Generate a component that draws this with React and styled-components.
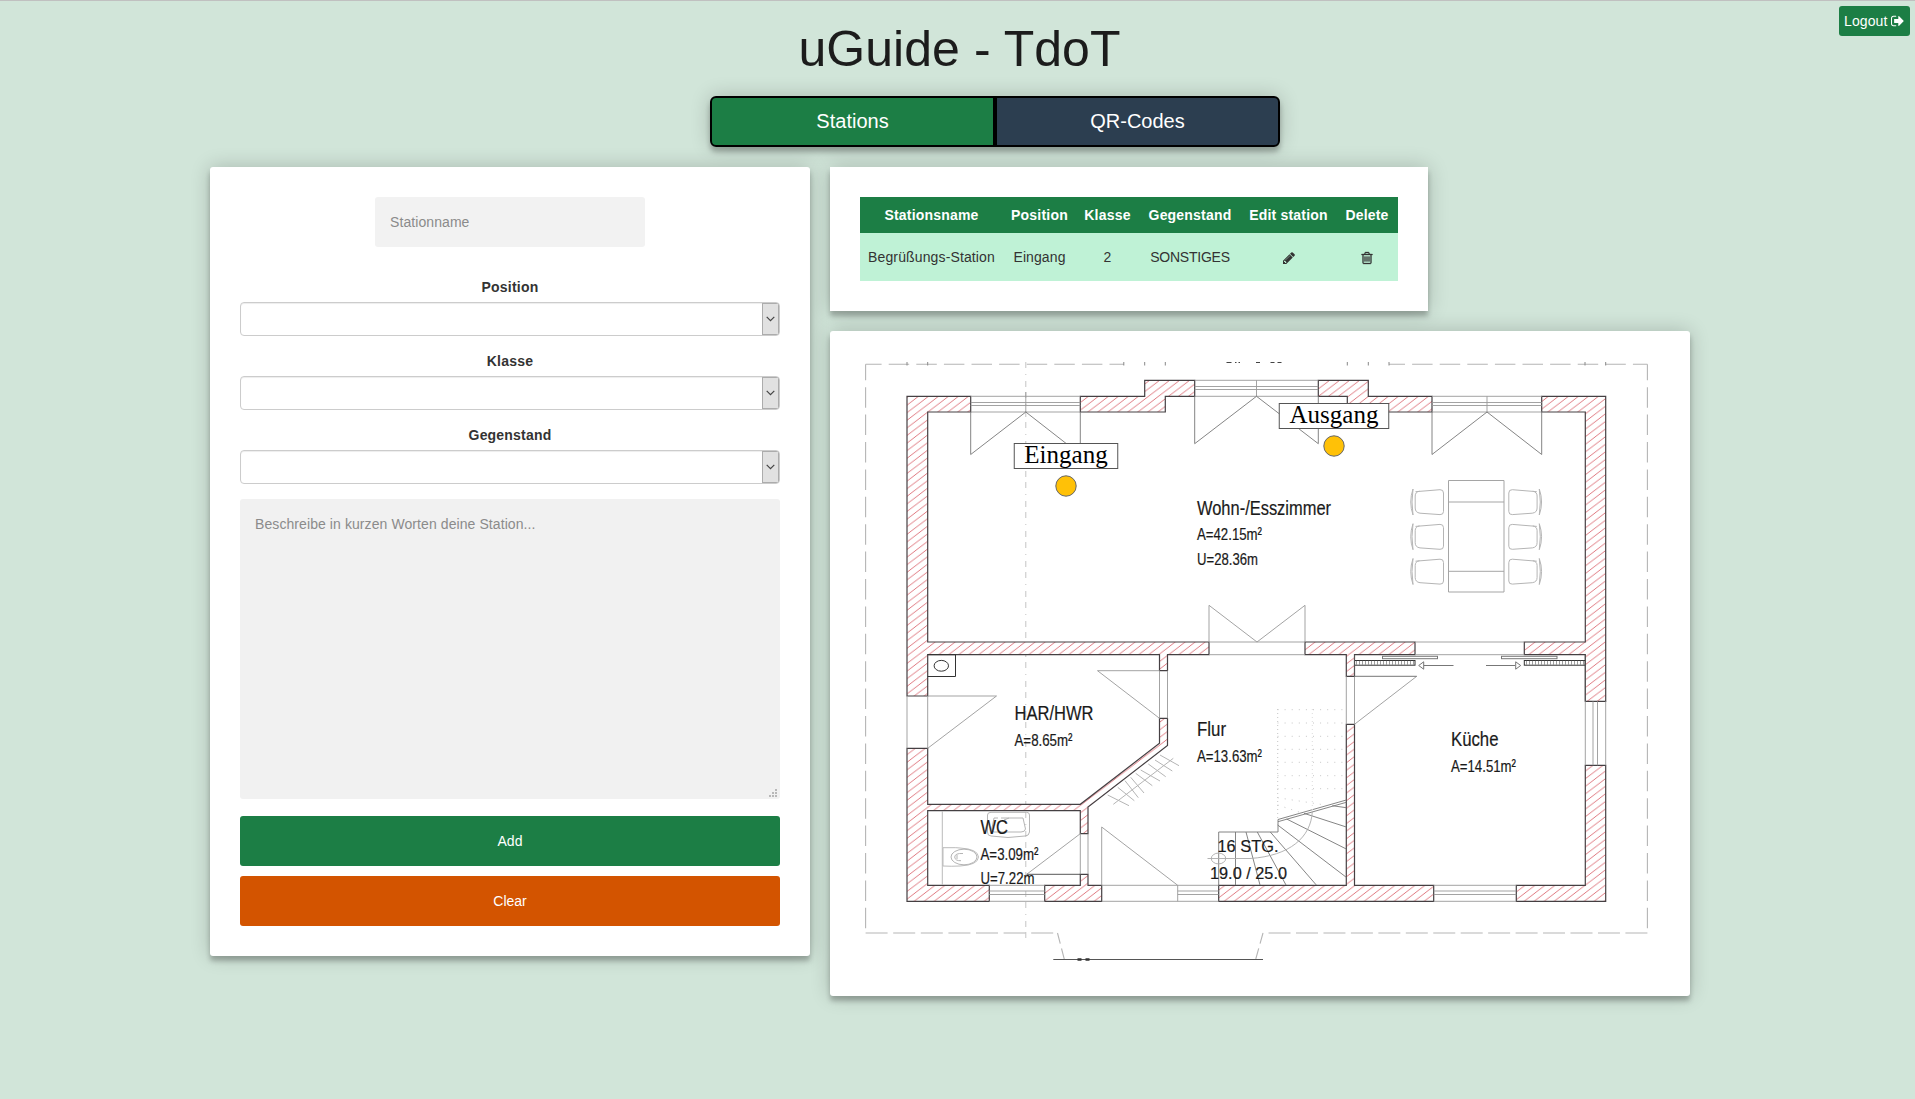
import React from "react";
import styled, { createGlobalStyle } from "styled-components";

const GlobalStyle = createGlobalStyle`
  *, *::before, *::after { box-sizing: border-box; }
  html, body { margin: 0; padding: 0; }
  body {
    background: #d1e5d9;
    color: #333;
    font-family: "Liberation Sans", Arial, Helvetica, sans-serif;
    font-size: 14px;
    line-height: 20px;
    overflow: hidden;
  }
`;

const raised = "0 0 20px 0 rgba(0, 0, 0, 0.2), 0 5px 5px 0 rgba(0, 0, 0, 0.24)";

const Page = styled.div`
  display: flex;
  flex-direction: column;
  height: 1099px;
  border-top: 1px solid #c0c0c0;
`;

const Header = styled.header`
  display: grid;
  align-items: start;

  > * { grid-area: 1 / 1; }
`;

const Title = styled.h1`
  margin: 21px 0 19px;
  padding-left: 4px;
  font-size: 50px;
  font-weight: 400;
  line-height: 55px;
  letter-spacing: 0.05px;
  text-align: center;
  color: #1c1c1c;
`;

const LogoutButton = styled.button`
  justify-self: end;
  display: flex;
  align-items: center;
  gap: 4px;
  height: 30px;
  width: 71px;
  margin: 5px 5px 0 0;
  padding: 0 5px;
  border: 0;
  border-radius: 3px;
  background: #1c7e45;
  color: #fff;
  font: inherit;
  letter-spacing: 0.1px;
  white-space: nowrap;
`;

const Nav = styled.nav`
  display: flex;
  align-self: center;
  margin-left: 75px;
  border-radius: 6px;
  box-shadow: ${raised};
`;

const NavButton = styled.button`
  width: 285px;
  height: 51px;
  padding: 0;
  border: 2px solid #000;
  border-radius: ${(p) => (p.$side === "left" ? "6px 0 0 6px" : "0 6px 6px 0")};
  background: ${(p) => (p.$active ? "#1c7e45" : "#2c3e50")};
  color: #fff;
  font: 20px "Liberation Sans", Arial, sans-serif;
`;

const Main = styled.main`
  display: flex;
  align-items: flex-start;
  gap: 20px;
  padding: 20px 0 0 210px;
`;

const Column = styled.div`
  display: flex;
  flex-direction: column;
  align-items: flex-start;
  gap: 20px;
`;

const Card = styled.section`
  width: ${(p) => p.$width}px;
  padding: 30px;
  border-radius: ${(p) => p.$radius ?? 3}px;
  background: #fff;
  box-shadow: ${raised};
`;

const Form = styled.form`
  display: flex;
  flex-direction: column;
`;

const NameInput = styled.input`
  align-self: center;
  width: 270px;
  height: 50px;
  margin-bottom: 30px;
  padding: 15px;
  border: 0;
  border-radius: 3px;
  background: #f2f2f2;
  font: inherit;
  letter-spacing: 0.08px;

  &::placeholder { color: #8b8b8b; opacity: 1; }
`;

const Field = styled.label`
  display: flex;
  flex-direction: column;
  gap: 5px;
  margin-bottom: 15px;
  font-weight: 700;
  letter-spacing: 0.2px;
  text-align: center;
`;

const SelectFrame = styled.span`
  display: flex;
  height: 34px;
  border: 1px solid #ccc;
  border-radius: 4px;
  background: #fff;
  box-shadow: inset 0 1px 1px rgba(0, 0, 0, 0.075);
  overflow: hidden;
`;

const SelectControl = styled.select`
  flex: 1;
  appearance: none;
  border: 0;
  background: transparent;
  font: inherit;
`;

const SelectArrow = styled.span`
  display: flex;
  align-items: center;
  justify-content: center;
  width: 17px;
  border: 1px solid #acacac;
  background: #e1e1e1;
`;

const DescriptionFrame = styled.div`
  position: relative;
  display: flex;
  margin-bottom: 17px;
`;

const Description = styled.textarea`
  flex: 1;
  height: 300px;
  padding: 15px;
  border: 0;
  border-radius: 3px;
  background: #f1f1f1;
  font: inherit;
  letter-spacing: 0.085px;
  resize: none;

  &::placeholder { color: #8b8b8b; opacity: 1; }
`;

const Grip = styled.svg`
  position: absolute;
  right: 3px;
  bottom: 2px;
`;

const FormButton = styled.button`
  height: 50px;
  margin-top: ${(p) => (p.$spaced ? 10 : 0)}px;
  border: 0;
  border-radius: 3px;
  background: ${(p) => p.$color};
  color: #fff;
  font: inherit;
`;

const Table = styled.table`
  width: 538px;
  table-layout: fixed;
  border-collapse: collapse;
  text-align: center;
`;

const Th = styled.th`
  width: ${(p) => p.$width}px;
  height: 36px;
  padding: 0;
  background: #1c7e45;
  color: #fff;
  letter-spacing: 0.2px;
  white-space: nowrap;
`;

const Td = styled.td`
  height: 48px;
  padding: 0;
  background: #bff2d6;
  letter-spacing: ${(p) => p.$tracking ?? 0}px;
  white-space: nowrap;
`;

const Plan = styled.svg`
  display: block;
  width: 800px;
  height: 605px;

  text {
    font-family: "Liberation Sans", Arial, sans-serif;
    fill: #1a1a1a;
  }

  .room {
    stroke: #1a1a1a;
    stroke-width: 0.2px;
  }

  .pin text {
    font-family: "Liberation Serif", "Times New Roman", serif;
    font-size: 25px;
    fill: #000;
  }
`;

const Glyph = styled.svg`
  display: inline-block;
  vertical-align: middle;
  fill: currentColor;
  flex: none;
`;

const SignOutIcon = () => (
  <Glyph width="13" height="14" viewBox="0 128 1600 1536">
    <path d="M640 1440q0 4 1 20t.5 26.500-3 23.500-10 19.500-20.500 6.500h-320q-119 0-203.500-84.500t-84.500-203.500v-704q0-119 84.500-203.500t203.500-84.500h320q13 0 22.500 9.500t9.500 22.500q0 4 1 20t.5 26.500-3 23.500-10 19.500-20.500 6.500h-320q-66 0-113 47t-47 113v704q0 66 47 113t113 47h312l11.500 1 11.500 3 8 5.500 7 9 2 13.500zM1568 896q0 26-19 45l-544 544q-19 19-45 19t-45-19-19-45v-288h-448q-26 0-45-19t-19-45v-384q0-26 19-45t45-19h448v-288q0-26 19-45t45-19 45 19l544 544q19 19 19 45z" />
  </Glyph>
);

const PencilIcon = () => (
  <Glyph width="14" height="14" viewBox="0 0 1792 1792">
    <path d="M491 1536l91-91-235-235-91 91v107h128v128h107zm523-928q0-22-22-22-10 0-17 7l-542 542q-7 7-7 17 0 22 22 22 10 0 17-7l542-542q7-7 7-17zm-54-192l416 416-832 832h-416v-416zm683 96q0 53-37 90l-166 166-416-416 166-165q36-38 90-38 53 0 91 38l235 234q37 39 37 91z" />
  </Glyph>
);

const TrashIcon = () => (
  <Glyph width="14" height="14" viewBox="0 0 1792 1792" stroke="currentColor" strokeWidth="40">
    <path d="M704 736v576q0 14-9 23t-23 9h-64q-14 0-23-9t-9-23v-576q0-14 9-23t23-9h64q14 0 23 9t9 23zm256 0v576q0 14-9 23t-23 9h-64q-14 0-23-9t-9-23v-576q0-14 9-23t23-9h64q14 0 23 9t9 23zm256 0v576q0 14-9 23t-23 9h-64q-14 0-23-9t-9-23v-576q0-14 9-23t23-9h64q14 0 23 9t9 23zm128 724v-948h-896v948q0 22 7 40.500t14.500 27 10.500 8.500h832q3 0 10.500-8.500t14.500-27 7-40.500zm-672-1076h448l-48-117q-7-9-17-11h-317q-10 2-17 11zm928 32v64q0 14-9 23t-23 9h-96v948q0 83-47 143.500t-113 60.500h-832q-66 0-113-58.500t-47-141.500v-952h-96q-14 0-23-9t-9-23v-64q0-14 9-23t23-9h309l70-167q15-37 54-63t79-26h320q40 0 79 26t54 63l70 167h309q14 0 23 9t9 23z" />
  </Glyph>
);

const SelectField = ({ label }) => (
  <Field>
    {label}
    <SelectFrame>
      <SelectControl aria-label={label} />
      <SelectArrow>
        <svg width="9" height="6" viewBox="0 0 9 6" fill="none" stroke="#444" strokeWidth="1.2">
          <path d="M.7 .8L4.500 4.600L8.300 .8" />
        </svg>
      </SelectArrow>
    </SelectFrame>
  </Field>
);

const walls = [
  "907,396.3 970.7,396.3 970.7,412 927.7,412 927.7,642 1209,642 1209,654.7 1167.5,654.7 1167.5,670.7 1159.5,670.7 1159.5,654.7 927.7,654.7 927.7,696 907,696",
  "907,748.3 927.7,748.3 927.7,804.3 1080.3,804.3 1159.5,743.3 1159.5,718.3 1167.5,718.3 1167.5,745.5 1088,807 1088,833.7 1080.3,833.7 1080.3,810.7 927.7,810.7 927.7,885.3 989.3,885.3 989.3,901.3 907,901.3",
  "1044.7,885.3 1080.3,885.3 1080.3,874.3 1088,874.3 1088,885.3 1101.7,885.3 1101.7,901.3 1044.7,901.3",
  "1080.3,396.3 1144.7,396.3 1144.7,380.3 1194.7,380.3 1194.7,396.3 1165.3,396.3 1165.3,412 1080.3,412",
  "1318.3,380.3 1368.3,380.3 1368.3,396.3 1432,396.3 1432,412 1347.3,412 1347.3,396.3 1318.3,396.3",
  "1541.7,396.3 1605.7,396.3 1605.7,701.3 1585.3,701.3 1585.3,654.7 1524.3,654.7 1524.3,642 1585.3,642 1585.3,412 1541.7,412",
  "1305,642 1415,642 1415,654.7 1354.5,654.7 1354.5,676.3 1346.3,676.3 1346.3,654.7 1305,654.7",
  "1585.3,765.3 1605.7,765.3 1605.7,901.3 1516.3,901.3 1516.3,885.3 1585.3,885.3",
  "1218.7,885.3 1346.3,885.3 1346.3,724.3 1354.5,724.3 1354.5,885.3 1433.7,885.3 1433.7,901.3 1218.7,901.3",
];

const roomLabels = [
  { x: 1197, y: 514.7, w: 134, size: 21, text: "Wohn-/Esszimmer" },
  { x: 1197, y: 540.3, w: 65, size: 17, text: "A=42.15m²" },
  { x: 1197, y: 564.6, w: 61, size: 17, text: "U=28.36m" },
  { x: 1014.5, y: 720, w: 79, size: 21, text: "HAR/HWR" },
  { x: 1014.5, y: 746, w: 58, size: 17, text: "A=8.65m²" },
  { x: 1197, y: 736.4, w: 29, size: 21, text: "Flur" },
  { x: 1197, y: 762, w: 65, size: 17, text: "A=13.63m²" },
  { x: 980.5, y: 834, w: 27.5, size: 21, text: "WC" },
  { x: 980.5, y: 860, w: 58, size: 17, text: "A=3.09m²" },
  { x: 980.5, y: 884, w: 54, size: 17, text: "U=7.22m" },
  { x: 1451, y: 746.3, w: 47.5, size: 21, text: "Küche" },
  { x: 1451, y: 772, w: 65, size: 17, text: "A=14.51m²" },
  { x: 1217.5, y: 852, w: 61, size: 17, text: "16 STG." },
  { x: 1210, y: 878.5, w: 77, size: 17, text: "19.0 / 25.0" },
];

const pins = [
  { x: 1066, y: 486, w: 103.5, label: "Eingang" },
  { x: 1334, y: 446, w: 109.5, label: "Ausgang" },
];

const chairRows = [502, 536.7, 571.5];
const dottedRows = [709.7, 723, 736.3, 749.3, 762.3, 775.7, 788.7];
const topTicks = [907, 927.7, 1123.8, 1144.7, 1165.3, 1347.3, 1368.3, 1389, 1585, 1605.7];

const Chair = () => (
  <g>
    <path d="M-12.500 -10.300L12 -12.300Q15.500 -12.500 15.500 -9V9.500Q15.500 12.800 12 12.600L-8 11.200Q-12.800 10.500 -12.800 6V-6Q-12.800 -10 -8.500 -10.800" />
    <path d="M-15 -13Q-19.500 0 -15 13M-15 -13Q-17 0 -15 13" />
  </g>
);

const FloorPlan = () => (
  <Plan viewBox="860 361 800 605">
    <defs>
      <pattern id="hatch" width="10" height="7.600" patternUnits="userSpaceOnUse">
        <path d="M-2.500 1.900L2.500 -1.900M-2.500 9.500L12.500 -1.900M7.500 9.500L12.500 5.700" stroke="#d9606a" strokeWidth="0.85" />
      </pattern>
    </defs>

    <g fill="none" stroke="#b5b5b5" strokeWidth="1.100">
      <path d="M865.600 364.300H1124" strokeDasharray="20.500 7.100" strokeDashoffset="4.500" />
      <path d="M1389 364.300H1647.400" strokeDasharray="20.500 7.100" strokeDashoffset="4.500" />
      <path d="M865.600 364.300V933" strokeDasharray="20.500 6.900" strokeDashoffset="4.500" />
      <path d="M1647.400 364.300V933" strokeDasharray="20.500 6.900" strokeDashoffset="4.500" />
      <path d="M865.600 933H1057.500" strokeDasharray="22 5.600" />
      <path d="M1647.400 933H1263" strokeDasharray="22 5.450" />
      <path d="M1057.500 933L1064.500 960M1263 933L1255.500 960" strokeDasharray="11 5" />
      <path d="M1025.800 362V938" stroke="#bdbdbd" strokeDasharray="6 6 1 6 6 5" strokeWidth="0.900" />
    </g>
    <path d="M1053.300 959.500H1263" stroke="#555" strokeWidth="1" />
    <path d="M1077.500 959.500h4M1085.500 959.500h4" stroke="#333" strokeWidth="2.400" />
    <path d={topTicks.map((x) => `M${x} 362v3.500`).join("")} stroke="#888" />
    <path d="M1226.500 362.500h5M1235 362.500h1.500M1238.500 362.500h1.500M1256 362.500h4M1270.500 362.500h4M1277.500 362.500h4" stroke="#444" strokeWidth="1.200" />

    {walls.map((points) => (
      <polygon key={points} points={points} fill="#fff" />
    ))}
    {walls.map((points) => (
      <polygon key={points} points={points} fill="url(#hatch)" stroke="#454043" strokeWidth="1.200" />
    ))}

    <g fill="none" stroke="#999" strokeWidth="0.900">
      <path d="M970.700 396.300H1080.300M970.700 402.500H1080.300M970.700 405.500H1080.300M970.700 412H1080.300M1025.800 392V412" />
      <path d="M1194.700 380.300H1318.300M1194.700 386.500H1318.300M1194.700 389.500H1318.300M1194.700 396.300H1318.300M1256.500 380.300V396.300" />
      <path d="M1432 396.300H1541.700M1432 402.500H1541.700M1432 405.500H1541.700M1432 412H1541.700M1487 396.300V412" />
      <path d="M970.700 412V454.500L1025.800 412L1080.300 454.500V412" stroke="#777" />
      <path d="M1194.700 396.300V443.700L1256.500 396.300L1318.300 443.700V396.300" stroke="#777" />
      <path d="M1432 412V454.500L1487 412L1541.700 454.500V412" stroke="#777" />
      <path d="M1209 642V605.300L1257 642L1305 605.300V642M1209 642H1305M1209 654.700H1305" />
      <path d="M1415 642H1524.300M1415 654.700H1524.300" />
      <path d="M989.300 885.300H1044.700M989.300 891H1044.700M989.300 894.500H1044.700M989.300 901.300H1044.700" />
      <path d="M1177.700 891H1218.700M1177.700 894.500H1218.700M1101.700 885.300H1218.700M1101.700 901.300H1218.700M1177.700 885.300V901.300" />
      <path d="M1433.700 885.300H1516.300M1433.700 891H1516.300M1433.700 894.500H1516.300M1433.700 901.300H1516.300" />
      <path d="M1585.300 701.300V765.300M1593 701.300V765.300M1597.500 701.300V765.300M1605.700 701.300V765.300" />
      <path d="M907 696V748.300M927.700 696V748.300M927.700 696H996.500L927.700 748.300" />
      <path d="M1159.500 670.700V718.300M1167.500 670.700V718.300M1159.500 670.700H1097.500L1159.500 718.300" />
      <path d="M1080.300 833.700V874.300M1088 833.700V874.300M1080.300 833.700L1026.700 874.300" />
      <path d="M1026.700 874.300H1080.300" stroke="#444" />
      <path d="M1101.700 885.300V827L1177.700 885.300" />
      <path d="M1346.300 676.300V724.300M1354.500 676.300V724.300M1416.700 676.300L1354.500 724.300" />
      <path d="M1354.500 676.300H1416.700" stroke="#666" />
    </g>

    <g fill="none" stroke="#777" strokeWidth="1">
      <rect x="1382.500" y="656.300" width="55" height="2.400" />
      <rect x="1501.500" y="656.300" width="55.500" height="2.400" />
      <path d="M1424 665.500H1453.500M1486 665.500H1515M1418.700 665.500L1423.700 661.800V669.200ZM1520.700 665.500L1515.700 661.800V669.200Z" />
      <rect x="1354.500" y="660.500" width="60.500" height="4.700" stroke="#333" />
      <rect x="1524.300" y="660.500" width="61" height="4.700" stroke="#333" />
      <path d="M1356 662.800H1415M1526 662.800H1585" strokeWidth="4" strokeDasharray="0.700 2.300" />
      <path d="M1354.500 654.700V676M1585.300 654.700V701" stroke="#555" />
      <path d="M927.700 654.700H955.500V676.500H927.700" stroke="#333" />
      <ellipse cx="941.300" cy="665.800" rx="7.200" ry="5.400" stroke="#333" />
    </g>

    <g fill="none" stroke="#b5b5b5" strokeWidth="1">
      {chairRows.map((y) => (
        <React.Fragment key={y}>
          <g transform={`translate(1428 ${y})`}><Chair /></g>
          <g transform={`translate(1524.300 ${y}) scale(-1 1)`}><Chair /></g>
        </React.Fragment>
      ))}
      <path d="M1448.500 480.500H1504V592H1448.500ZM1448.500 502H1504M1448.500 571.300H1504" stroke="#a5a5a5" />
      <path d="M942.300 811V885M943 847.700H951Q956 847.500 960 848Q978 849 978.500 857Q978 865 960 866Q951 866.500 943 866Z" stroke="#bbb" />
      <ellipse cx="964" cy="857" rx="13" ry="7.800" />
      <path d="M963 853.500Q955 853 954.700 857Q955 861 961 860.700M957 855V859" />
      <path d="M991 812.300H1026.500Q1029.500 812.300 1029.500 815V832Q1029 836 1025 836Q1008 839 991 836Q987.500 836 987.500 832V815Q987.500 812.300 991 812.300ZM1001 818H1023L1025.500 829Q1025 832 1021 832H994Q991 832 992 828L994 818H998M1004 820L1009 818" />
      <path d="M1113.300 804.300L1173.300 758.300M1107.700 795L1129 805.700M1117.700 787.300L1134.300 800.700M1125 780.700L1138.300 797.700M1130.700 777.300L1144 793M1135.700 773.300L1152.300 785.700M1140.700 770L1160 781M1148.300 764L1165.700 776.700M1155 760L1172.300 771M1160 755L1179 765.700" />
    </g>

    <g fill="none" stroke="#777" strokeWidth="0.900">
      <path d="M1218.700 885V832H1278V819.500L1346.300 800M1278 821.700L1346.300 802.300M1235.500 832V885" />
      <path d="M1246 832L1260 885M1257.300 832L1286 885M1270.300 832L1316.300 885M1277.700 825L1346.300 877.300M1286.700 819L1346.300 849M1304 813.300L1346.300 827M1332.300 805.700L1346.300 807.700" />
      <path d="M1207.500 858.500H1250C1290 856 1311 837 1312.300 811.700" stroke="#aaa" />
      <ellipse cx="1218.500" cy="858.500" rx="7.200" ry="5.400" stroke="#aaa" />
    </g>
    <g fill="none" stroke="#c6c6c6" strokeWidth="1" strokeDasharray="1 6.100">
      {dottedRows.map((y) => (
        <path key={y} d={`M1277.500 ${y}H1346`} />
      ))}
      <path d="M1277.700 797.700L1325 805M1277.700 805L1302 813" />
      <path d="M1277.700 709V819" strokeDasharray="1 3" />
      <path d="M1312.300 709V811" stroke="#ddd" strokeDasharray="1 3" />
    </g>

    {roomLabels.map((l) => (
      <text key={l.text} className="room" x={l.x} y={l.y} fontSize={l.size} textLength={l.w} lengthAdjust="spacingAndGlyphs">
        {l.text}
      </text>
    ))}

    {pins.map((p) => (
      <g key={p.label} className="pin">
        <rect x={p.x - p.w / 2} y={p.y - 42.500} width={p.w} height="25" fill="#fff" stroke="#555" />
        <text x={p.x} y={p.y - 23} textAnchor="middle">{p.label}</text>
        <circle cx={p.x} cy={p.y} r="10.200" fill="#ffc107" stroke="#666" />
      </g>
    ))}
  </Plan>
);

const columns = [
  ["Stationsname", 143],
  ["Position", 73],
  ["Klasse", 63],
  ["Gegenstand", 102],
  ["Edit station", 95],
  ["Delete", 62],
];

export default function App() {
  return (
    <Page>
      <GlobalStyle />
      <Header>
        <Title>uGuide - TdoT</Title>
        <LogoutButton>
          Logout
          <SignOutIcon />
        </LogoutButton>
      </Header>
      <Nav>
        <NavButton $side="left" $active>Stations</NavButton>
        <NavButton $side="right">QR-Codes</NavButton>
      </Nav>
      <Main>
        <Card $width={600}>
          <Form>
            <NameInput placeholder="Stationname" />
            <SelectField label="Position" />
            <SelectField label="Klasse" />
            <SelectField label="Gegenstand" />
            <DescriptionFrame>
              <Description placeholder="Beschreibe in kurzen Worten deine Station..." />
              <Grip width="8" height="8" viewBox="0 0 8 8" fill="#b8b8b8">
                <path d="M6 0h2v2h-2zM3 3h2v2h-2zM6 3h2v2h-2zM0 6h2v2h-2zM3 6h2v2h-2zM6 6h2v2h-2z" />
              </Grip>
            </DescriptionFrame>
            <FormButton type="button" $color="#1c7e45">Add</FormButton>
            <FormButton type="button" $color="#d35400" $spaced>Clear</FormButton>
          </Form>
        </Card>
        <Column>
          <Card $width={598} $radius={0}>
            <Table>
              <thead>
                <tr>
                  {columns.map(([name, width]) => (
                    <Th key={name} $width={width}>{name}</Th>
                  ))}
                </tr>
              </thead>
              <tbody>
                <tr>
                  <Td $tracking={0.13}>Begrüßungs-Station</Td>
                  <Td $tracking={0.1}>Eingang</Td>
                  <Td>2</Td>
                  <Td $tracking={-0.25}>SONSTIGES</Td>
                  <Td><PencilIcon /></Td>
                  <Td><TrashIcon /></Td>
                </tr>
              </tbody>
            </Table>
          </Card>
          <Card $width={860}>
            <FloorPlan />
          </Card>
        </Column>
      </Main>
    </Page>
  );
}
